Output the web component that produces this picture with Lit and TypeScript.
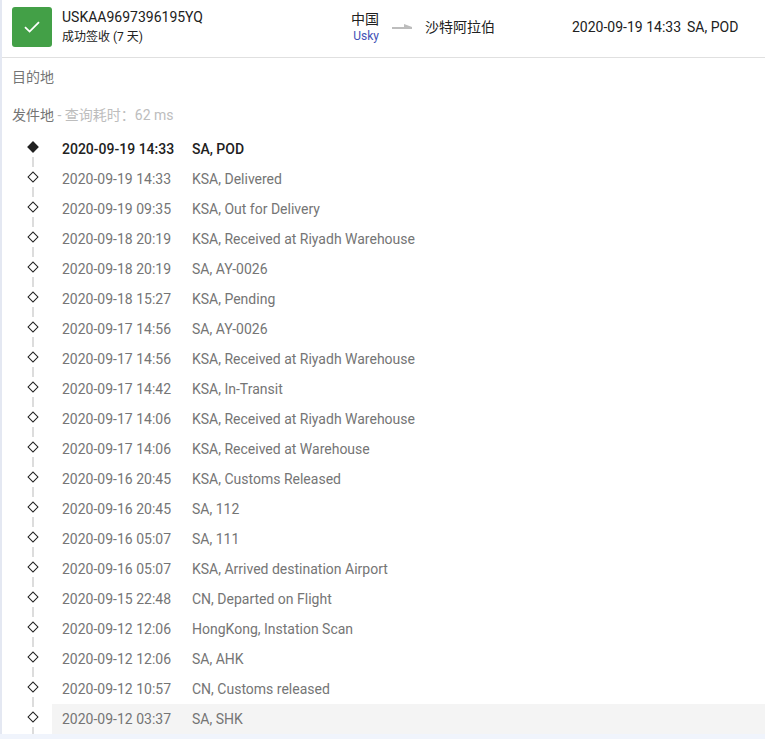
import {LitElement, html, css} from "lit"
import {customElement} from "lit/decorators.js"

const events = [
	["2020-09-19 14:33", "SA, POD"],
	["2020-09-19 14:33", "KSA, Delivered"],
	["2020-09-19 09:35", "KSA, Out for Delivery"],
	["2020-09-18 20:19", "KSA, Received at Riyadh Warehouse"],
	["2020-09-18 20:19", "SA, AY-0026"],
	["2020-09-18 15:27", "KSA, Pending"],
	["2020-09-17 14:56", "SA, AY-0026"],
	["2020-09-17 14:56", "KSA, Received at Riyadh Warehouse"],
	["2020-09-17 14:42", "KSA, In-Transit"],
	["2020-09-17 14:06", "KSA, Received at Riyadh Warehouse"],
	["2020-09-17 14:06", "KSA, Received at Warehouse"],
	["2020-09-16 20:45", "KSA, Customs Released"],
	["2020-09-16 20:45", "SA, 112"],
	["2020-09-16 05:07", "SA, 111"],
	["2020-09-16 05:07", "KSA, Arrived destination Airport"],
	["2020-09-15 22:48", "CN, Departed on Flight"],
	["2020-09-12 12:06", "HongKong, Instation Scan"],
	["2020-09-12 12:06", "SA, AHK"],
	["2020-09-12 10:57", "CN, Customs released"],
	["2020-09-12 03:37", "SA, SHK"],
]

@customElement("app-root")
export class AppRoot extends LitElement {

	static styles = css`
	:host {
		display: block;
		height: 739px;
		overflow: hidden;
		background: #f0f4fc;
		font-family: Roboto, "Noto Sans CJK SC", sans-serif;
		font-size: 14px;
		color: #212121;
	}
	.card {
		height: 734px;
		overflow: hidden;
		background: #fff;
		border-left: 2px solid #e4e8f2;
	}
	.header {
		display: flex;
		align-items: center;
		height: 54px;
		padding: 0 0 3px 10px;
		border-bottom: 1px solid #e0e0e0;
	}
	.status {
		display: flex;
		align-items: center;
		justify-content: center;
		width: 40px;
		height: 40px;
		margin-right: 10px;
		border-radius: 3px;
		background: #43a047;
	}
	.ident {
		width: 289px;
		line-height: 20px;
	}
	.sub {
		font-size: 12px;
	}
	.origin {
		width: 28px;
		text-align: right;
		line-height: 18px;
	}
	.carrier {
		font-size: 12px;
		line-height: 16px;
		color: #3f51b5;
	}
	.arrow {
		display: block;
		margin: 0 13px 0 13px;
	}
	.dest {
		width: 147px;
		margin-bottom: 2px;
	}
	.latest {
		display: flex;
		gap: 6px;
	}
	.section {
		color: #757575;
		line-height: 20px;
		padding-left: 10px;
	}
	.section.first {
		margin-top: 9px;
	}
	.section.second {
		margin-top: 18px;
		margin-bottom: 9px;
	}
	.took {
		color: #bdbdbd;
	}
	.row {
		display: flex;
		align-items: center;
		height: 30px;
		color: #757575;
	}
	.row.current {
		color: #212121;
		font-weight: 500;
	}
	.rail {
		position: relative;
		flex: none;
		width: 50px;
		height: 100%;
	}
	.rail::before {
		content: "";
		position: absolute;
		left: 30px;
		top: 23px;
		width: 2px;
		height: 10px;
		background: #dcdcdc;
	}
	.diamond {
		position: absolute;
		left: 27px;
		top: 9px;
		width: 8px;
		height: 8px;
		box-sizing: border-box;
		transform: rotate(45deg);
		border: 1px solid #212121;
		background: #fff;
	}
	.current .diamond {
		background: #212121;
	}
	.body {
		flex: 1;
		display: flex;
		align-items: center;
		height: 100%;
		padding-left: 10px;
	}
	.row.last .body {
		background: #f4f4f4;
	}
	.time {
		width: 130px;
	}
	`

	render() {
		return html`
			<div class="card">
				<div class="header">
					<div class="status">
						<svg width="16" height="12" viewBox="0 0 16 12" fill="none" stroke="#fff" stroke-width="1.8">
							<path d="M1 6.2 5.6 10.6 15 1.2"/>
						</svg>
					</div>
					<div class="ident">
						<div>USKAA9697396195YQ</div>
						<div class="sub">成功签收 (7 天)</div>
					</div>
					<div class="origin">
						<div>中国</div>
						<div class="carrier">Usky</div>
					</div>
					<svg class="arrow" width="20" height="6" viewBox="0 0 20 6">
						<path d="M0 3H20V5H0Z M12 0 20 3H12Z" fill="#bdbdbd"/>
					</svg>
					<div class="dest">沙特阿拉伯</div>
					<div class="latest"><span>2020-09-19 14:33</span><span>SA, POD</span></div>
				</div>
				<div class="section first">目的地</div>
				<div class="section second">发件地 <span class="took">- 查询耗时：62 ms</span></div>
				${events.map(([time, text], i) => html`
					<div class="row ${i === 0 ? "current" : ""} ${i === events.length - 1 ? "last" : ""}">
						<div class="rail"><div class="diamond"></div></div>
						<div class="body">
							<div class="time">${time}</div>
							<div>${text}</div>
						</div>
					</div>
				`)}
			</div>
		`
	}
}
